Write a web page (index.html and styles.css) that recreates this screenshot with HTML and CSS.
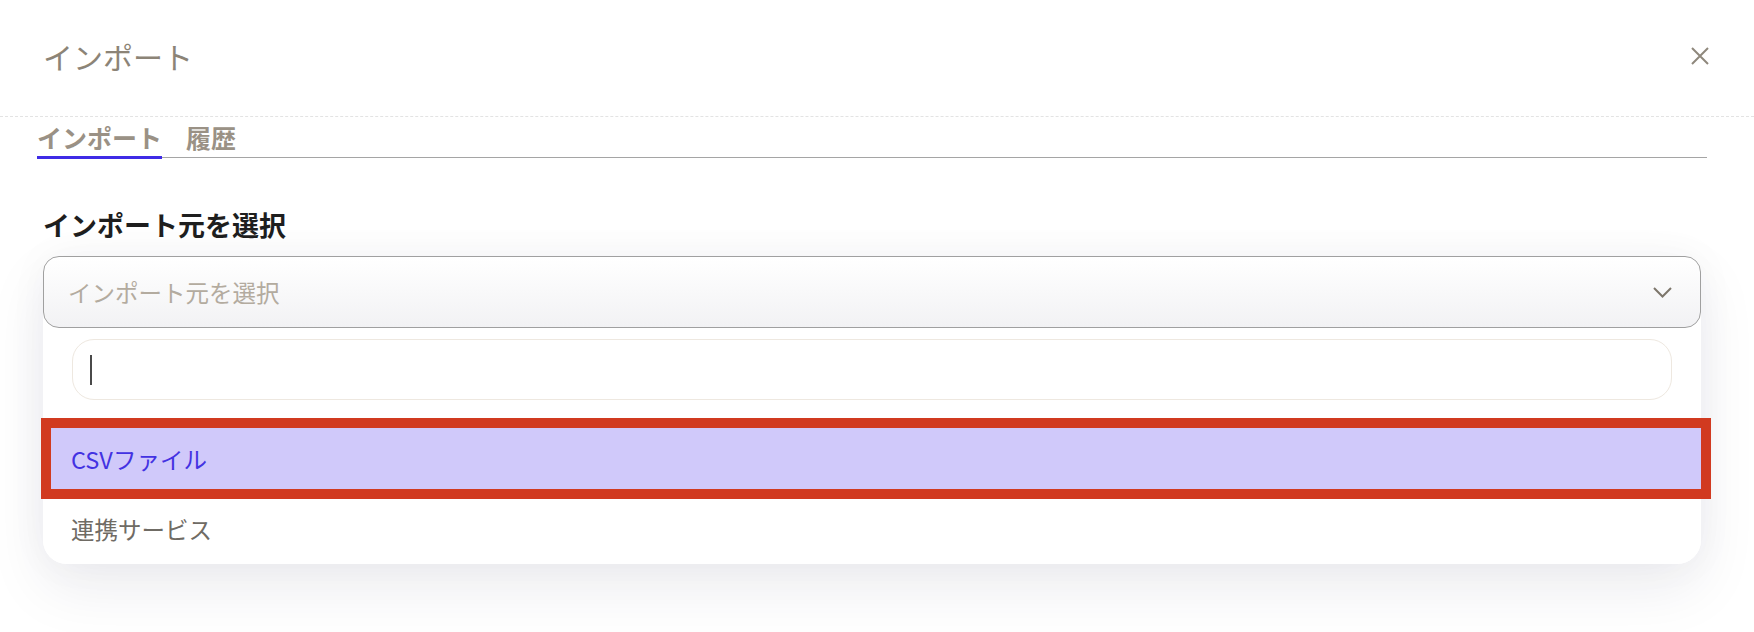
FILE: index.html
```html
<!DOCTYPE html>
<html lang="ja">
<head>
<meta charset="utf-8">
<title>インポート</title>
<link rel="stylesheet" href="styles.css">
</head>
<body>
<div class="dialog">
  <header class="dialog-header">
    <h1 class="dialog-title">インポート</h1>
    <button class="close-btn" aria-label="閉じる">
      <svg width="18" height="18" viewBox="0 0 18 18"><path d="M1 1L17 17M17 1L1 17" stroke="#8f887c" stroke-width="2" fill="none"/></svg>
    </button>
  </header>
  <nav class="tabs">
    <div class="tab tab-active">インポート</div>
    <div class="tab">履歴</div>
  </nav>
  <section class="field">
    <div class="field-label">インポート元を選択</div>
    <div class="combo">
      <div class="select">
        <span class="placeholder">インポート元を選択</span>
        <svg class="chevron" width="19" height="11" viewBox="0 0 19 11"><path d="M1 1L9.5 9.5L18 1" stroke="#7d766b" stroke-width="2" fill="none"/></svg>
      </div>
      <div class="panel">
        <div class="search"><span class="caret"></span></div>
        <ul class="options">
          <li class="option option-selected">CSVファイル<span class="annotation"></span></li>
          <li class="option">連携サービス</li>
        </ul>
      </div>
    </div>
  </section>
</div>
</body>
</html>
```

FILE: styles.css
```css
* { box-sizing: border-box; }
html, body { margin: 0; padding: 0; background: #ffffff; }
body {
  font-family: "Noto Sans CJK JP", "Noto Sans", sans-serif;
  width: 1754px;
  height: 632px;
  overflow: hidden;
}
.dialog-header {
  height: 117px;
  border-bottom: 1px dashed #e3e3e3;
  display: flex;
  justify-content: space-between;
  align-items: flex-start;
  padding: 36px 45px 0 43px;
}
.dialog-title {
  margin: 0;
  font-size: 30px;
  font-weight: 400;
  line-height: 40px;
  color: #8c8477;
}
.close-btn {
  border: 0;
  background: none;
  padding: 0;
  height: 40px;
  display: flex;
  align-items: center;
  cursor: pointer;
}
.tabs {
  display: flex;
  gap: 24px;
  margin: 0 47px 0 37px;
  padding-top: 5px;
  border-bottom: 1px solid #a5a5a5;
}
.tab {
  font-size: 25px;
  font-weight: 700;
  line-height: 30px;
  color: #9a9185;
  padding-bottom: 4px;
  border-bottom: 3px solid transparent;
  margin-bottom: -2px;
}
.tab-active { border-bottom-color: #3f2be6; }
.field { padding: 0 53px 0 43px; }
.field-label {
  margin-top: 49px;
  font-size: 27px;
  font-weight: 700;
  line-height: 36px;
  color: #1e1e1e;
}
.combo {
  margin-top: 13px;
  border-radius: 16px 16px 24px 24px;
  box-shadow: 0 24px 60px rgba(30, 30, 70, 0.08), 0 0 40px rgba(30, 30, 70, 0.04);
}
.select {
  height: 72px;
  border: 1px solid #a0a0a0;
  border-radius: 16px;
  background: linear-gradient(#ffffff, #f2f2f4);
  display: flex;
  align-items: center;
  justify-content: space-between;
  padding: 0 28px 0 24px;
}
.placeholder {
  font-size: 23.5px;
  color: #b3ab9f;
}
.panel {
  background: #ffffff;
  border-radius: 0 0 24px 24px;
  padding: 11px 0 0;
}
.search {
  margin: 0 29px;
  height: 61px;
  border: 1px solid #eee8e0;
  border-radius: 22px;
  display: flex;
  align-items: center;
  padding-left: 17px;
}
.caret {
  width: 2px;
  height: 30px;
  background: #4a4a4a;
}
.options {
  list-style: none;
  margin: 24px 0 0;
  padding: 0;
}
.option {
  height: 70px;
  line-height: 70px;
  padding-left: 28px;
  font-size: 23.5px;
  color: #6f6b64;
}
.option-selected {
  position: relative;
  background: #d0c9fa;
  color: #4332e2;
}
.annotation {
  position: absolute;
  top: -6px;
  bottom: -5px;
  left: -2px;
  right: -10px;
  border: 10px solid #d13a20;
}
```
